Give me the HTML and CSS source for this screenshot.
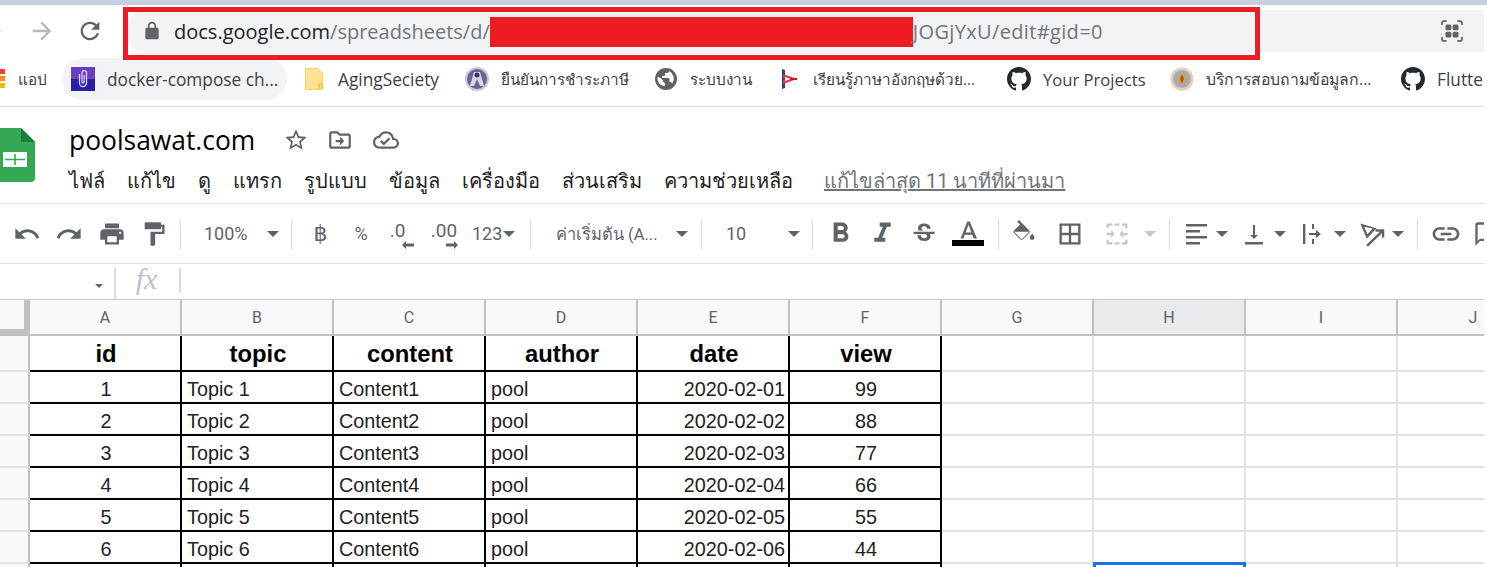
FILE: index.html
```html
<!DOCTYPE html>
<html lang="th">
<head>
<meta charset="utf-8">
<title>poolsawat.com - Google Sheets</title>
<link rel="stylesheet" href="styles.css">
</head>
<body>
<div class="page">
  <div class="topstrip"></div>
  <div class="content">

  <div class="chrome-bar">
    <button class="nav back"><svg viewBox="0 0 24 24"><path d="M20 11H7.830l5.590-5.590L12 4l-8 8 8 8 1.410-1.410L7.830 13H20z"/></svg></button>
    <button class="nav fwd"><svg viewBox="0 0 24 24"><path d="M12 4l-1.410 1.410L16.170 11H4v2h12.170l-5.580 5.590L12 20l8-8z"/></svg></button>
    <button class="nav reload"><svg viewBox="0 0 24 24"><path d="M17.650 6.350C16.200 4.900 14.210 4 12 4c-4.420 0-7.990 3.580-7.990 8s3.570 8 7.990 8c3.730 0 6.840-2.550 7.730-6h-2.080c-.820 2.330-3.040 4-5.650 4-3.310 0-6-2.690-6-6s2.690-6 6-6c1.660 0 3.140.690 4.220 1.780L13 11h7V4l-2.350 2.350z"/></svg></button>
    <div class="omnibox">
      <svg class="lock" viewBox="0 0 24 24"><path d="M18 8h-1V6c0-2.760-2.240-5-5-5S7 3.240 7 6v2H6c-1.100 0-2 .900-2 2v10c0 1.100.900 2 2 2h12c1.100 0 2-.900 2-2V10c0-1.100-.900-2-2-2zM9 6c0-1.660 1.340-3 3-3s3 1.340 3 3v2H9V6z"/></svg>
      <div class="url"><span class="host">docs.google.com</span>/spreadsheets/d/<span class="hidden-id"></span><span class="url-end">JOGjYxU/edit#gid=0</span></div>
      <svg class="tabs-icon" viewBox="0 0 24 24"><path d="M2 6.500V4.500C2 3 3 2 4.500 2H7v1.600H4.600c-.600 0-1 .400-1 1V6.500zM17 2h2.500C21 2 22 3 22 4.500v2h-1.600V4.600c0-.600-.400-1-1-1H17zM2 17.500h1.600v1.900c0 .600.400 1 1 1H7V22H4.500C3 22 2 21 2 19.500zM20.400 17.500H22v2C22 21 21 22 19.500 22H17v-1.600h2.400c.600 0 1-.400 1-1z"/><rect x="6" y="6" width="5.400" height="5.400" rx="1.400"/><rect x="12.600" y="6" width="5.400" height="5.400" rx="1.400"/><rect x="6" y="12.600" width="5.400" height="5.400" rx="1.400"/><rect x="12.600" y="12.600" width="5.400" height="5.400" rx="1.400"/></svg>
    </div>
  </div>

  <div class="bookmarks">
    <div class="bm bm-apps">
      <svg class="apps-icon" viewBox="0 0 5 20"><rect y="0" width="5" height="5" fill="#ea4335"/><rect y="7" width="5" height="5" fill="#f28b20"/><rect y="14" width="5" height="5" fill="#fbbc04"/></svg>
      <span class="th">แอป</span>
    </div>
    <div class="bm bm-docker">
      <svg class="fav" viewBox="0 0 24 24"><rect width="24" height="24" fill="#6a3fc4"/><rect y="12" width="24" height="12" fill="#2a1fa8"/><path d="M8.500 7v9a3.500 3.500 0 0 0 7 0V6a2.300 2.300 0 0 0-4.600 0v9a1.100 1.100 0 0 0 2.200 0V8" fill="none" stroke="#d9d2f5" stroke-width="1.300"/></svg>
      <span>docker-compose ch...</span>
    </div>
    <div class="bm bm-aging">
      <svg class="fav" viewBox="0 0 24 24"><path d="M3.500 1.500h12.500l4.500 4.500v16.500h-17z" fill="#fde293" stroke="#f4d35e"/><path d="M17 22v-4a1.200 1.200 0 0 1 3 0v4" fill="none" stroke="#e8b93c" stroke-width="1.200"/></svg>
      <span>AgingSeciety</span>
    </div>
    <div class="bm bm-avatar">
      <svg class="fav" viewBox="0 0 24 24"><circle cx="12" cy="12" r="12" fill="#c9c6dc"/><circle cx="12" cy="12" r="10" fill="#6b6491"/><path d="M9 5l-4 14h4l3-7 3 7h4L15 5z" fill="#d8d5e6"/><circle cx="12" cy="8" r="2.500" fill="#3a3360"/></svg>
      <span class="th">ยืนยันการชำระภาษี</span>
    </div>
    <div class="bm bm-globe">
      <svg class="fav" viewBox="0 0 24 24"><path fill="#5f6368" d="M12 1a11 11 0 1 0 0 22 11 11 0 0 0 0-22zM3.500 12c0-.800.100-1.500.300-2.200L8 12l1 2c0 1 1 2 2 2v3.300A8.500 8.500 0 0 1 3.500 12zm14.800 4.500c-.300-.800-1-1.500-1.800-1.500h-1v-3c0-.600-.400-1-1-1H8v-2h2c.600 0 1-.400 1-1V6h2c1.100 0 2-.900 2-2a8.500 8.500 0 0 1 3.300 12.500z"/></svg>
      <span class="th">ระบบงาน</span>
    </div>
    <div class="bm bm-flag">
      <svg class="fav" viewBox="0 0 24 24"><path d="M5 2l3 1v18l-3 1z" fill="#27408b"/><path d="M8 4l12 8-12 8z" fill="#fff"/><path d="M6 7l14 5-14 5z" fill="#e0354b"/><path d="M6 11h14v2H6z" fill="#c8102e"/><path d="M8 10l6 2-6 2z" fill="#fff"/></svg>
      <span class="th">เรียนรู้ภาษาอังกฤษด้วย...</span>
    </div>
    <div class="bm bm-gh">
      <svg class="fav gh" viewBox="0 0 16 16"><path d="M8 0C3.580 0 0 3.580 0 8c0 3.540 2.290 6.530 5.470 7.590.400.070.550-.170.550-.380 0-.190-.010-.820-.010-1.490-2.010.370-2.530-.490-2.690-.940-.090-.230-.480-.940-.820-1.130-.280-.150-.680-.520-.010-.530.630-.010 1.080.580 1.230.820.720 1.210 1.870.870 2.330.660.070-.520.280-.870.510-1.070-1.780-.200-3.640-.890-3.640-3.950 0-.870.310-1.590.820-2.150-.080-.200-.360-1.020.080-2.120 0 0 .670-.210 2.200.820.640-.180 1.320-.270 2-.270.680 0 1.360.090 2 .270 1.530-1.040 2.200-.820 2.200-.820.440 1.100.160 1.920.080 2.120.510.560.820 1.270.820 2.150 0 3.070-1.870 3.750-3.650 3.950.290.250.540.730.540 1.480 0 1.070-.010 1.930-.010 2.200 0 .210.150.460.550.380A8.013 8.013 0 0016 8c0-4.420-3.580-8-8-8z"/></svg>
      <span class="en-narrow">Your Projects</span>
    </div>
    <div class="bm bm-seal">
      <svg class="fav" viewBox="0 0 24 24"><circle cx="12" cy="12" r="11.500" fill="#f3c9a8"/><circle cx="12" cy="12" r="9" fill="#8fb4cf"/><circle cx="12" cy="12" r="5.500" fill="#d9a05b"/><path d="M12 7l2 5-2 5-2-5z" fill="#b4552d"/></svg>
      <span class="th-wide">บริการสอบถามข้อมูลก...</span>
    </div>
    <div class="bm bm-gh2">
      <svg class="fav gh" viewBox="0 0 16 16"><path d="M8 0C3.580 0 0 3.580 0 8c0 3.540 2.290 6.530 5.470 7.590.400.070.550-.170.550-.380 0-.190-.010-.820-.010-1.490-2.010.370-2.530-.490-2.690-.940-.090-.230-.480-.940-.820-1.130-.280-.150-.680-.520-.010-.530.630-.010 1.080.580 1.230.820.720 1.210 1.870.870 2.330.660.070-.520.280-.870.510-1.070-1.780-.200-3.640-.890-3.640-3.950 0-.870.310-1.590.820-2.150-.080-.200-.360-1.020.080-2.120 0 0 .670-.210 2.200.820.640-.180 1.320-.270 2-.270.680 0 1.360.090 2 .270 1.530-1.040 2.200-.820 2.200-.820.440 1.100.160 1.920.080 2.120.510.560.820 1.270.820 2.150 0 3.070-1.870 3.750-3.650 3.950.290.250.540.730.540 1.480 0 1.070-.010 1.930-.010 2.200 0 .210.150.460.550.380A8.013 8.013 0 0016 8c0-4.420-3.580-8-8-8z"/></svg>
      <span>Flutter</span>
    </div>
  </div>

  <header class="doc-head">
    <svg class="sheets-logo" viewBox="0 0 35 54"><path d="M0 0h21l14 14v36a4 4 0 0 1-4 4H0z" fill="#34a853"/><path d="M21 0l14 14H21z" fill="#188038"/><rect x="3" y="24" width="24" height="15" fill="#fff"/><path d="M14.200 26v11h1.600V26zM5 30.700v1.600h20v-1.600z" fill="#34a853"/></svg>
    <div class="doc-text">
      <div class="title-row">
        <span class="doc-title">poolsawat.com</span>
        <svg class="ti ti-star" viewBox="0 0 24 24"><path d="M22 9.240l-7.190-.620L12 2 9.190 8.630 2 9.240l5.460 4.730L5.820 21 12 17.270 18.180 21l-1.630-7.030L22 9.240zM12 15.400l-3.760 2.270 1-4.280-3.320-2.880 4.380-.380L12 6.100l1.710 4.040 4.380.380-3.320 2.880 1 4.280L12 15.400z"/></svg>
        <svg class="ti ti-move" viewBox="0 0 24 24"><path d="M20 6h-8l-2-2H4c-1.100 0-2 .900-2 2v12c0 1.100.900 2 2 2h16c1.100 0 2-.900 2-2V8c0-1.100-.900-2-2-2zm0 12H4V6h5.170l2 2H20v10zm-8-1l4-4-4-4v3H8v2h4v3z"/></svg>
        <svg class="ti ti-cloud" viewBox="0 0 24 24"><path d="M19.350 10.040C18.670 6.590 15.640 4 12 4 9.110 4 6.600 5.640 5.350 8.040 2.340 8.360 0 10.910 0 14c0 3.310 2.690 6 6 6h13c2.760 0 5-2.240 5-5 0-2.640-2.050-4.780-4.650-4.960zM19 18H6c-2.210 0-4-1.790-4-4 0-2.050 1.530-3.760 3.560-3.970l1.070-.110.500-.950C8.080 7.140 9.940 6 12 6c2.620 0 4.880 1.860 5.390 4.430l.300 1.500 1.530.110c1.560.100 2.780 1.410 2.780 2.960 0 1.650-1.350 3-3 3zm-9-3.820l-2.090-2.090L6.500 13.500 10 17l6.010-6.010-1.410-1.410z"/></svg>
      </div>
      <nav class="menu">
        <span>ไฟล์</span><span>แก้ไข</span><span>ดู</span><span>แทรก</span><span>รูปแบบ</span><span>ข้อมูล</span><span>เครื่องมือ</span><span>ส่วนเสริม</span><span>ความช่วยเหลือ</span>
        <a class="last-edit">แก้ไขล่าสุด 11 นาทีที่ผ่านมา</a>
      </nav>
    </div>
  </header>

  <div class="toolbar">
    <div class="tb w42"><svg class="ic" viewBox="0 0 24 24"><path d="M12.500 8c-2.650 0-5.050.990-6.900 2.600L2 7v9h9l-3.620-3.620c1.390-1.160 3.160-1.880 5.120-1.880 3.540 0 6.550 2.310 7.600 5.500l2.370-.780C21.080 11.030 17.150 8 12.500 8z"/></svg></div>
    <div class="tb w42"><svg class="ic" viewBox="0 0 24 24"><path d="M18.400 10.600C16.550 8.990 14.150 8 11.500 8c-4.650 0-8.580 3.030-9.960 7.220L3.900 16c1.050-3.190 4.050-5.500 7.600-5.500 1.950 0 3.730.720 5.120 1.880L13 16h9V7l-3.600 3.600z"/></svg></div>
    <div class="tb w43"><svg class="ic" viewBox="0 0 24 24"><path d="M19 8H5c-1.660 0-3 1.340-3 3v6h4v4h12v-4h4v-6c0-1.660-1.340-3-3-3zm-3 11H8v-5h8v5zm3-7c-.550 0-1-.450-1-1s.450-1 1-1 1 .450 1 1-.450 1-1 1zm-1-9H6v4h12V3z"/></svg></div>
    <div class="tb w42"><svg class="ic" viewBox="0 0 24 24"><path d="M18 4V3c0-.550-.450-1-1-1H5c-.550 0-1 .450-1 1v4c0 .550.450 1 1 1h12c.550 0 1-.450 1-1V6h1v4H9v11c0 .550.450 1 1 1h2c.550 0 1-.450 1-1v-9h8V4h-3z"/></svg></div>
    <i class="sep sep-a"></i>
    <div class="tb-select zoom-sel"><span>100%</span><i class="caret"></i></div>
    <i class="sep"></i>
    <div class="tb fmt-baht tx">฿</div>
    <div class="tb fmt-pct tx-sm">%</div>
    <div class="tb fmt-dec1"><span class="dec dec-one">.0</span><svg class="dec-arrow" viewBox="0 0 12 8"><path d="M4 0v2.500h8v3H4V8L0 4z"/></svg></div>
    <div class="tb fmt-dec2"><span class="dec">.00</span><svg class="dec-arrow" viewBox="0 0 12 8"><path d="M8 0v2.500H0v3h8V8l4-4z"/></svg></div>
    <div class="tb-select fmt-more"><span>123</span><i class="caret"></i></div>
    <i class="sep sep-b"></i>
    <div class="tb-select font-sel"><span class="th-font">ค่าเริ่มต้น (A...</span><i class="caret"></i></div>
    <i class="sep"></i>
    <div class="tb-select size-sel"><span>10</span><i class="caret"></i></div>
    <i class="sep"></i>
    <div class="tb w42 first-b"><svg class="ic-b" viewBox="0 0 24 24"><path d="M15.600 10.790c.970-.670 1.650-1.770 1.650-2.790 0-2.260-1.750-4-4-4H7v14h7.040c2.090 0 3.710-1.700 3.710-3.790 0-1.520-.860-2.820-2.150-3.420zM10 6.500h3c.830 0 1.500.670 1.500 1.500s-.670 1.500-1.500 1.500h-3v-3zm3.500 9H10v-3h3.500c.830 0 1.500.670 1.500 1.500s-.670 1.500-1.500 1.500z"/></svg></div>
    <div class="tb w42"><svg class="ic-b" viewBox="0 0 24 24"><path d="M10 4v3h2.210l-3.420 8H6v3h8v-3h-2.210l3.420-8H18V4z"/></svg></div>
    <div class="tb w42"><svg class="ic" viewBox="0 0 24 24"><path d="M7.240 8.750c-.260-.480-.390-1.030-.390-1.670 0-.610.130-1.160.400-1.670.260-.500.630-.930 1.110-1.290.480-.350 1.050-.630 1.700-.830.660-.190 1.390-.290 2.180-.290.810 0 1.540.110 2.210.340.660.220 1.230.540 1.690.940.470.400.830.880 1.080 1.430.250.550.380 1.150.380 1.810h-3.010c0-.310-.050-.590-.150-.850-.090-.270-.240-.490-.440-.680-.200-.190-.450-.330-.750-.44-.300-.100-.660-.160-1.060-.16-.390 0-.74.040-1.030.13-.29.09-.53.21-.72.36-.19.16-.34.34-.44.55-.1.21-.15.43-.15.66 0 .48.25.88.74 1.21.38.25.77.48 1.41.7H7.390c-.05-.08-.11-.17-.15-.25zM21 12v-2H3v2h9.620c.18.07.4.14.55.2.37.17.66.34.87.51.21.17.35.36.43.57.07.2.11.43.11.69 0 .23-.05.45-.14.66-.09.2-.23.38-.42.53-.19.15-.42.26-.71.35-.29.08-.63.13-1.01.13-.43 0-.83-.04-1.18-.13s-.66-.23-.91-.42c-.25-.19-.45-.44-.59-.75-.14-.31-.25-.76-.25-1.21H6.400c0 .55.08 1.13.24 1.58.16.45.37.85.65 1.21.28.35.6.66.98.92.37.26.78.48 1.22.65.44.17.9.3 1.38.39.48.08.96.13 1.44.13.8 0 1.53-.09 2.18-.28s1.21-.45 1.67-.79c.46-.34.82-.77 1.07-1.27s.38-1.07.38-1.71c0-.6-.1-1.14-.31-1.61-.05-.11-.11-.23-.17-.33H21z"/></svg></div>
    <div class="tb text-color"><svg class="ic-a" viewBox="0 0 14 14"><path d="M6 0L.5 14h2.250l1.120-3h6.250l1.120 3H14L8 0H6zM4.620 9L7 2.670 9.380 9H4.620z"/></svg><i class="color-bar"></i></div>
    <i class="sep sep-c"></i>
    <div class="tb w50"><svg class="ic" viewBox="0 0 24 24"><path d="M16.560 8.940L7.620 0 6.210 1.410l2.380 2.380-5.150 5.150c-.590.590-.590 1.540 0 2.120l5.500 5.500c.290.290.680.440 1.060.440s.770-.150 1.060-.440l5.500-5.500c.590-.580.590-1.530 0-2.120zM3.500 10h13L10 16.500zM19 11.500s-2 2.170-2 3.500c0 1.100.900 2 2 2s2-.900 2-2c0-1.330-2-3.500-2-3.500z"/></svg></div>
    <div class="tb w42"><svg class="ic" viewBox="0 0 24 24"><path d="M3 3v18h18V3H3zm8 16H5v-6h6v6zm0-8H5V5h6v6zm8 8h-6v-6h6v6zm0-8h-6V5h6v6z"/></svg></div>
    <div class="tb w52 off"><svg class="ic" viewBox="0 0 24 24"><path d="M3 3h5v2H5v2H3zM16 3h5v4h-2V5h-3zM3 17h2v2h3v2H3zM19 17h2v4h-5v-2h3zM10 3h4v2h-4zM10 19h4v2h-4zM3 11h4V8.500l3 3.500-3 3.500V13H3zM21 11h-4V8.500L14 12l3 3.500V13h4z"/></svg></div>
    <div class="tb w14 off"><i class="caret"></i></div>
    <i class="sep sep-d"></i>
    <div class="tb-ic g-align"><svg class="ic-s" viewBox="0 0 24 24"><path d="M3 2h21v2.400H3zM3 8h14v2.400H3zM3 14h21v2.400H3zM3 20h14v2.400H3z"/></svg><i class="caret"></i></div>
    <div class="tb-ic g-valign"><svg class="ic-s" viewBox="0 0 24 24"><path d="M16 13h-3V3h-2v10H8l4 4 4-4zM3 20v2.400h18V20z"/></svg><i class="caret"></i></div>
    <div class="tb-ic g-wrap"><svg class="ic-s" viewBox="0 0 24 24"><path d="M2 2h2.400v20H2zM11 2h2v5h-2zM11 17h2v5h-2zM8 11h7V8l5 4-5 4v-3H8z"/></svg><i class="caret"></i></div>
    <div class="tb-ic g-rotate"><svg class="ic" viewBox="0 0 24 24"><path d="M2 3l14 4-3.500 3.800L7.500 16zM5.300 5.800l2.800 6.500 4.400-5z" fill-rule="evenodd"/><path d="M22.500 8v7h-2v-3.600L8.500 23 7 21.500 18.800 10H15V8z"/></svg><i class="caret"></i></div>
    <i class="sep sep-e"></i>
    <div class="tb link-ic"><svg class="ic-l" viewBox="0 0 24 24"><path d="M3.900 12c0-1.710 1.390-3.100 3.100-3.100h4V7H7c-2.760 0-5 2.240-5 5s2.240 5 5 5h4v-1.900H7c-1.710 0-3.100-1.390-3.100-3.100zM8 13h8v-2H8v2zm9-6h-4v1.900h4c1.710 0 3.100 1.390 3.100 3.100s-1.390 3.100-3.100 3.100h-4V17h4c2.760 0 5-2.240 5-5s-2.240-5-5-5z"/></svg></div>
    <div class="tb w42 comment-ic"><svg class="ic" viewBox="0 0 24 24"><path d="M20 2H4c-1.100 0-2 .900-2 2v18l4-4h14c1.100 0 2-.900 2-2V4c0-1.100-.900-2-2-2zm0 14H6l-2 2V4h16v12z"/></svg></div>
  </div>

  <div class="formula-bar">
    <div class="namebox"><i class="caret caret-sm"></i></div>
    <div class="fx">fx</div>
    <div class="fx-input"></div>
  </div>

  <div class="grid">
    <div class="corner"></div>
    <div class="ch">A</div><div class="ch">B</div><div class="ch">C</div><div class="ch">D</div><div class="ch">E</div><div class="ch">F</div><div class="ch">G</div><div class="ch ch-on">H</div><div class="ch">I</div><div class="ch">J</div>

    <div class="rh"></div>
    <div class="c k h">id</div><div class="c k h">topic</div><div class="c k h">content</div><div class="c k h">author</div><div class="c k h">date</div><div class="c k h">view</div><div class="c"></div><div class="c"></div><div class="c"></div><div class="c"></div>

    <div class="rh"></div>
    <div class="c k m">1</div><div class="c k">Topic 1</div><div class="c k">Content1</div><div class="c k">pool</div><div class="c k r">2020-02-01</div><div class="c k m">99</div><div class="c"></div><div class="c"></div><div class="c"></div><div class="c"></div>

    <div class="rh"></div>
    <div class="c k m">2</div><div class="c k">Topic 2</div><div class="c k">Content2</div><div class="c k">pool</div><div class="c k r">2020-02-02</div><div class="c k m">88</div><div class="c"></div><div class="c"></div><div class="c"></div><div class="c"></div>

    <div class="rh"></div>
    <div class="c k m">3</div><div class="c k">Topic 3</div><div class="c k">Content3</div><div class="c k">pool</div><div class="c k r">2020-02-03</div><div class="c k m">77</div><div class="c"></div><div class="c"></div><div class="c"></div><div class="c"></div>

    <div class="rh"></div>
    <div class="c k m">4</div><div class="c k">Topic 4</div><div class="c k">Content4</div><div class="c k">pool</div><div class="c k r">2020-02-04</div><div class="c k m">66</div><div class="c"></div><div class="c"></div><div class="c"></div><div class="c"></div>

    <div class="rh"></div>
    <div class="c k m">5</div><div class="c k">Topic 5</div><div class="c k">Content5</div><div class="c k">pool</div><div class="c k r">2020-02-05</div><div class="c k m">55</div><div class="c"></div><div class="c"></div><div class="c"></div><div class="c"></div>

    <div class="rh"></div>
    <div class="c k m">6</div><div class="c k">Topic 6</div><div class="c k">Content6</div><div class="c k">pool</div><div class="c k r">2020-02-06</div><div class="c k m">44</div><div class="c"></div><div class="c"></div><div class="c"></div><div class="c"></div>

    <div class="rh"></div>
    <div class="c k"></div><div class="c k"></div><div class="c k"></div><div class="c k"></div><div class="c k"></div><div class="c k"></div><div class="c"></div><div class="c sel"></div><div class="c"></div><div class="c"></div>
  </div>
  </div>
  <div class="redact-frame"></div>
</div>
</body>
</html>
```

FILE: styles.css
```css
* { box-sizing: border-box; margin: 0; padding: 0; }
html, body { width: 1487px; height: 567px; overflow: hidden; background: #fff; }
body { font-family: "Roboto", "Noto Sans", "DejaVu Sans", sans-serif; }
.page { position: relative; width: 1487px; height: 567px; overflow: hidden; display: flex; flex-direction: column; }
.topstrip { height: 5px; flex: none; background: #c5cfe0; }
.content { width: 1484px; flex: 1; overflow: hidden; display: flex; flex-direction: column; }

.chrome-bar { height: 52px; flex: none; display: flex; align-items: center; }
.nav { border: 0; background: none; width: 24px; height: 24px; display: block; flex: none; }
.nav svg { width: 28px; height: 28px; display: block; margin: -2px; }
.back { margin-left: -21px; fill: #b5b7ba; }
.fwd { margin-left: 27px; fill: #b5b7ba; }
.reload { margin-left: 24px; fill: #5f6368; }
.omnibox { flex: 1; height: 42px; margin-left: 23px; background: #f1f3f4; border-radius: 21px 0 0 21px; display: flex; align-items: center; padding-left: 17px; padding-right: 19px; }
.lock { width: 20px; height: 20px; fill: #5f6368; flex: none; }
.url { margin-left: 12px; font-family: "Open Sans", sans-serif; font-size: 20px; color: #70757a; white-space: nowrap; flex: 1; display: flex; align-items: center; height: 42px; }
.host { color: #202124; }
.hidden-id { width: 423px; height: 30px; background: #ed1c24; flex: none; margin-top: 2px; }
.url-end { letter-spacing: .35px; }
.tabs-icon { width: 26px; height: 26px; fill: #5f6368; flex: none; }

.redact-frame { position: absolute; left: 123px; top: 7px; width: 1137px; height: 53px; border: 5px solid #ed1c24; pointer-events: none; }

.bookmarks { height: 50px; flex: none; border-bottom: 1px solid #dadce0; display: flex; align-items: flex-start; padding-top: 1px; overflow: hidden; font-family: "Open Sans", sans-serif; font-size: 17.300px; color: #3c4043; white-space: nowrap; }
.th { font-size: 15.300px; }
.th-wide { font-size: 15.800px; }
.en-narrow { font-size: 16.600px; }
.bm { display: flex; align-items: center; gap: 12px; flex: none; height: 42px; padding-left: 15px; }
.fav { width: 24px; height: 24px; flex: none; }
.gh { fill: #24292e; }
.bm-apps { width: 62px; padding-left: 0; gap: 13px; }
.apps-icon { width: 5px; height: 20px; flex: none; }
.bm-docker { width: 225px; padding-left: 9px; background: #f1f3f4; border-radius: 21px; }
.bm-aging { width: 163px; }
.bm-avatar { width: 189px; }
.bm-globe { width: 123px; }
.bm-flag { width: 230px; }
.bm-gh { width: 163px; }
.bm-seal { width: 231px; }
.bm-gh2 { width: 120px; }

.doc-head { height: 97px; flex: none; display: flex; border-bottom: 1px solid #e0e0e0; }
.sheets-logo { width: 35px; height: 54px; margin-top: 21px; flex: none; }
.doc-text { margin-left: 34px; flex: 1; }
.title-row { display: flex; align-items: center; height: 30px; margin-top: 18px; }
.doc-title { font-family: "Open Sans", sans-serif; font-size: 26.400px; color: #000; width: 214px; }
.ti { width: 26px; height: 26px; fill: #5f6368; flex: none; }
.ti-move { margin-left: 18px; }
.ti-cloud { margin-left: 20px; }
.menu { display: flex; gap: 22px; margin-top: 10px; font-size: 20px; color: #202124; white-space: nowrap; align-items: center; }
.last-edit { margin-left: 9px; color: #70757a; text-decoration: underline; }

.toolbar { height: 60px; flex: none; display: flex; align-items: center; padding-left: 6px; border-bottom: 1px solid #e0e0e0; color: #5f6368; font-size: 18px; overflow: hidden; white-space: nowrap; }
.tb { display: flex; align-items: center; justify-content: center; flex: none; height: 36px; position: relative; }
.tb-ic { display: flex; align-items: center; flex: none; height: 36px; }
.w14 { width: 14px; } .w42 { width: 42px; } .w43 { width: 43px; } .w50 { width: 50px; } .w52 { width: 52px; }
.ic { width: 28px; height: 28px; fill: #5f6368; flex: none; }
.ic-b { width: 33px; height: 33px; fill: #5f6368; flex: none; }
.ic-s { width: 24px; height: 24px; fill: #5f6368; flex: none; }
.ic-l { width: 32px; height: 32px; fill: #5f6368; flex: none; }
.off .ic { fill: #c6c8ca; }
.off .caret { border-top-color: #c6c8ca; }
.sep { width: 1px; height: 30px; background: #dadce0; flex: none; }
.sep-a { margin-left: 5px; }
.sep-b { margin-left: 8px; }
.sep-c { margin-left: 7px; }
.sep-d { margin-left: 12px; }
.sep-e { margin-left: 9px; }
.caret { width: 0; height: 0; border-left: 6px solid transparent; border-right: 6px solid transparent; border-top: 6px solid #5f6368; flex: none; display: block; }
.tb-select { display: flex; align-items: center; justify-content: space-between; flex: none; height: 36px; }
.zoom-sel { width: 110px; padding: 0 12px 0 23px; }
.fmt-more { width: 53px; padding-left: 3px; padding-right: 7px; }
.font-sel { width: 170px; padding: 0 13px 0 25px; }
.th-font { font-size: 16.500px; }
.size-sel { width: 110px; padding: 0 12px 0 24px; }
.fmt-baht { width: 41px; margin-left: 8px; }
.fmt-pct { width: 40px; }
.fmt-dec1 { width: 38px; }
.fmt-dec2 { width: 50px; }
.tx { font-family: "DejaVu Sans", sans-serif; font-size: 22px; }
.tx-sm { font-size: 18px; }
.dec { font-size: 19px; margin-top: -6px; }
.dec-one { margin-left: -5px; }
.dec-arrow { position: absolute; width: 12px; height: 8px; fill: #5f6368; bottom: 3px; right: 5px; }
.fmt-dec2 .dec-arrow { right: 11px; }
.first-b { margin-left: 6px; }
.text-color { width: 46px; flex-direction: column; justify-content: flex-start; padding-top: 5px; }
.ic-a { width: 17px; height: 18px; fill: #5f6368; display: block; }
.color-bar { display: block; width: 32px; height: 6px; background: #000; margin-top: 1px; }
.g-align { width: 60px; padding-left: 13px; gap: 9px; }
.g-valign { width: 60px; padding-left: 12px; gap: 8px; }
.g-wrap { width: 60px; padding-left: 11px; gap: 9px; }
.g-rotate { width: 58px; padding-left: 8px; gap: 6px; }
.link-ic { width: 55px; }
.comment-ic { justify-content: flex-start; }

.formula-bar { height: 36px; flex: none; display: flex; align-items: stretch; border-bottom: 1px solid #c7c7c7; }
.namebox { width: 116px; display: flex; align-items: center; justify-content: flex-end; padding: 4px 11px 0 0; border-right: 2px solid #dadce0; margin: 4px 0 0; }
.caret-sm { border-left-width: 4px; border-right-width: 4px; border-top-width: 4px; }
.fx { width: 65px; padding: 0 4px 6px 0; font-family: "Liberation Serif", serif; font-style: italic; font-size: 30px; color: #bdc1c6; display: flex; align-items: center; justify-content: center; position: relative; }
.fx::after { content: ""; position: absolute; right: 0; top: 4px; bottom: 6px; width: 2px; background: #dadce0; }
.fx-input { flex: 1; }

.grid { flex: none; display: grid; grid-template-columns: 30px repeat(10, 152px); grid-template-rows: 36px 36px repeat(6, 32px) 20px; font-family: "Liberation Sans", Arial, sans-serif; font-size: 19.800px; color: #222; }
.corner { background: #f8f9fa; border-right: 6px solid #c0c0c0; border-bottom: 7px solid #c0c0c0; }
.ch { background: #f8f9fa; border-right: 2px solid #c0c0c0; border-bottom: 2px solid #c0c0c0; display: flex; align-items: center; justify-content: center; font-family: "Roboto", sans-serif; font-size: 16px; color: #5f6368; }
.ch-on { background: #e8eaed; }
.rh { background: #f8f9fa; border-right: 2px solid #c0c0c0; border-bottom: 2px solid #e2e2e2; }
.c { border-right: 2px solid #e2e2e2; border-bottom: 2px solid #e2e2e2; display: flex; align-items: center; padding: 4px 3px 0 5px; white-space: nowrap; overflow: hidden; }
.k { border-right-color: #000; border-bottom-color: #000; }
.h { font-weight: 700; font-size: 23.800px; color: #000; justify-content: center; padding-top: 2px; }
.m { justify-content: center; }
.r { justify-content: flex-end; }
.sel { border: 3px solid #1a73e8; margin: -2px 0 0 -1px; }
```
